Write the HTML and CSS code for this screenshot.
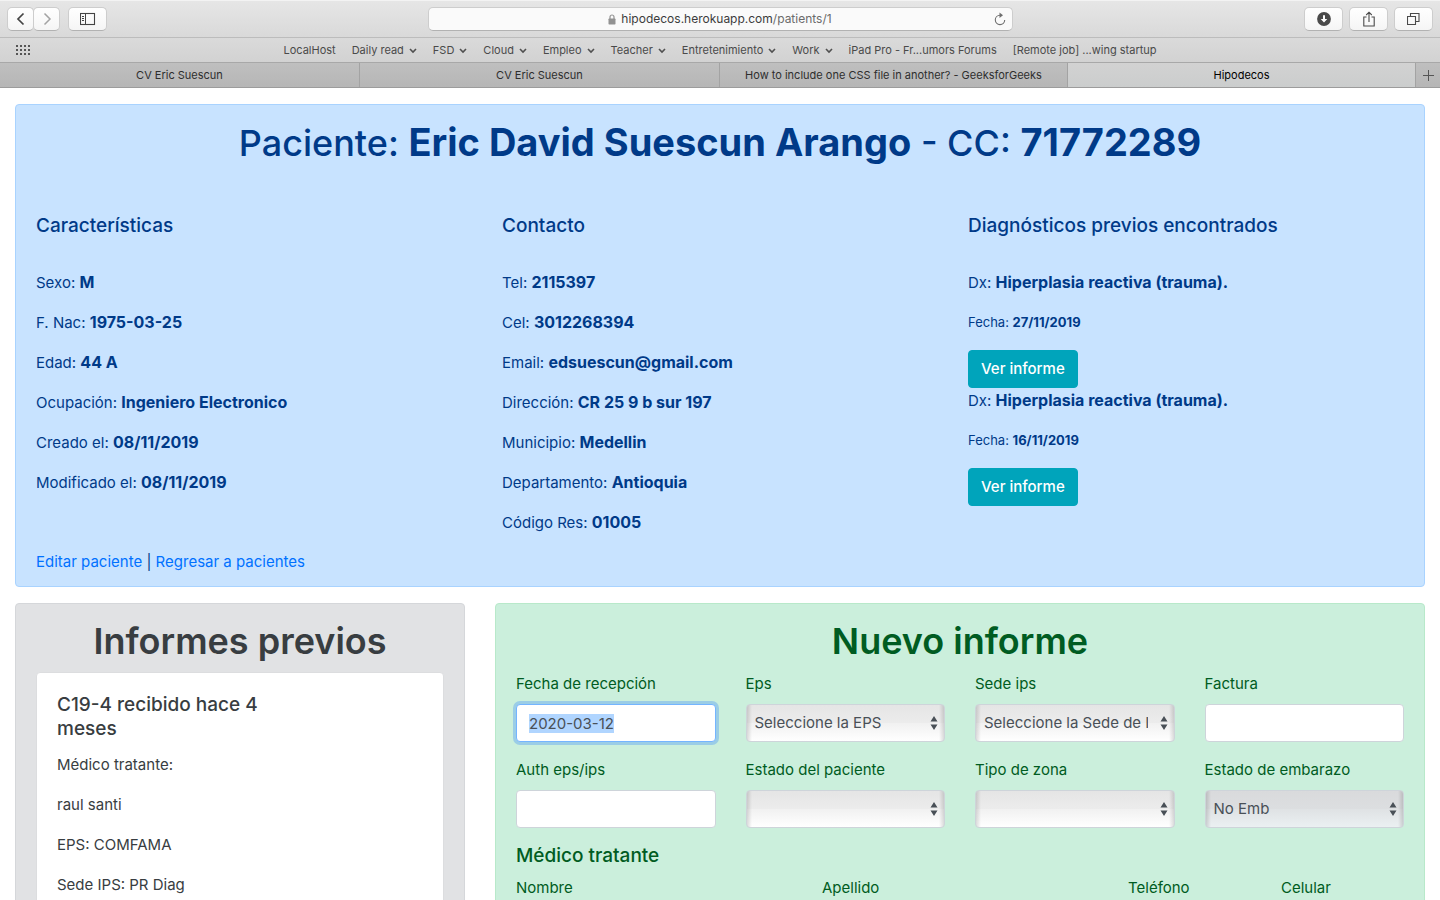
FILE: index.html
```html
<!DOCTYPE html>
<html lang="es">
<head>
<meta charset="utf-8">
<meta name="viewport" content="width=device-width, initial-scale=1">
<title>Hipodecos</title>
<link rel="stylesheet" href="styles.css">
</head>
<body>
<header class="browser">
  <div class="toolbar">
    <div class="tool-group">
      <div class="nav-pair">
        <button class="tool nav" type="button" aria-label="Atrás"><svg width="10" height="14" viewBox="0 0 10 14"><path d="M7.500 1.500 2 7l5.500 5.500" fill="none" stroke="#444" stroke-width="1.700"/></svg></button>
        <button class="tool nav" type="button" aria-label="Adelante"><svg width="10" height="14" viewBox="0 0 10 14"><path d="M2.500 1.500 8 7l-5.500 5.500" fill="none" stroke="#a3a3a3" stroke-width="1.500"/></svg></button>
      </div>
      <button class="tool" type="button" aria-label="Barra lateral"><svg width="16" height="14" viewBox="0 0 16 14"><g fill="none" stroke="#444"><rect x=".5" y="1.500" width="14" height="11" stroke-width="1.100"/><path d="M5.500 1.500v11M2 4.500h2M2 6.500h2M2 8.500h2"/></g></svg></button>
    </div>
    <div class="address">
      <svg class="lock" width="8" height="11" viewBox="0 0 8 11"><path d="M2 5V3a2 2 0 0 1 4 0v2" fill="none" stroke="#929292" stroke-width="1.200"/><rect x=".5" y="4.500" width="7" height="6" rx=".7" fill="#929292"/></svg>
      <span>hipodecos.herokuapp.com<span class="path">/patients/1</span></span>
      <button class="reload" type="button" aria-label="Recargar"><svg width="12" height="14" viewBox="0 0 12 14"><path d="M7 3.200H6A4.700 4.700 0 1 0 10.700 8" fill="none" stroke="#6e6e6e" stroke-width="1.100"/><path d="M5.500 0.600 9 3.300 5.500 6z" fill="#6e6e6e"/></svg></button>
    </div>
    <div class="tool-group right">
      <button class="tool" type="button" aria-label="Descargas"><svg width="14" height="14" viewBox="0 0 14 14"><circle cx="7" cy="7" r="6.900" fill="#4a4a4a"/><path d="M6 3.300h2V7h2.300L7 10.600 3.700 7H6z" fill="#fff"/></svg></button>
      <button class="tool" type="button" aria-label="Compartir"><svg width="12" height="16" viewBox="0 0 12 16"><path d="M3.500 6H.8v9h10.400V6H8.500M6 11V1.200M3.200 4 6 1.200 8.800 4" fill="none" stroke="#4a4a4a" stroke-width="1.100"/></svg></button>
      <button class="tool" type="button" aria-label="Pestañas"><svg width="13" height="14" viewBox="0 0 13 14"><path d="M.5 4.500h8v8h-8zM3.500 4.500v-3h8.500v8H8.500" fill="none" stroke="#4a4a4a" stroke-width="1.100"/></svg></button>
    </div>
  </div>
  <nav class="bookmarks" aria-label="Favoritos">
    <button class="grid-button" type="button" aria-label="Sitios"><svg width="15" height="11" viewBox="0 0 15 11"><path d="M0 1h15M0 5h15M0 9h15" stroke="#555" stroke-width="2" stroke-dasharray="2 2"/></svg></button>
    <a href="#">LocalHost</a>
    <a href="#" class="folder">Daily read</a>
    <a href="#" class="folder">FSD</a>
    <a href="#" class="folder">Cloud</a>
    <a href="#" class="folder">Empleo</a>
    <a href="#" class="folder">Teacher</a>
    <a href="#" class="folder">Entretenimiento</a>
    <a href="#" class="folder">Work</a>
    <a href="#">iPad Pro - Fr...umors Forums</a>
    <a href="#">[Remote job] ...wing startup</a>
  </nav>
  <div class="tabs">
    <button type="button" class="tab">CV Eric Suescun</button>
    <button type="button" class="tab">CV Eric Suescun</button>
    <button type="button" class="tab">How to include one CSS file in another? - GeeksforGeeks</button>
    <button type="button" class="tab active">Hipodecos</button>
    <button type="button" class="tab add" aria-label="Nueva pestaña"><svg width="11" height="11" viewBox="0 0 11 11"><path d="M5.500 0v11M0 5.500h11" stroke="#555"/></svg></button>
  </div>
</header>

<main class="page">
  <section class="panel patient">
    <h1>Paciente: <strong>Eric David Suescun Arango</strong> - CC: <strong>71772289</strong></h1>
    <div class="facts">
      <div>
        <h2>Características</h2>
        <p>Sexo: <strong>M</strong></p>
        <p>F. Nac: <strong>1975-03-25</strong></p>
        <p>Edad: <strong>44 A</strong></p>
        <p>Ocupación: <strong>Ingeniero Electronico</strong></p>
        <p>Creado el: <strong>08/11/2019</strong></p>
        <p>Modificado el: <strong>08/11/2019</strong></p>
      </div>
      <div>
        <h2>Contacto</h2>
        <p>Tel: <strong>2115397</strong></p>
        <p>Cel: <strong>3012268394</strong></p>
        <p>Email: <strong>edsuescun@gmail.com</strong></p>
        <p>Dirección: <strong>CR 25 9 b sur 197</strong></p>
        <p>Municipio: <strong>Medellin</strong></p>
        <p>Departamento: <strong>Antioquia</strong></p>
        <p>Código Res: <strong>01005</strong></p>
      </div>
      <div>
        <h2>Diagnósticos previos encontrados</h2>
        <p>Dx: <strong>Hiperplasia reactiva (trauma).</strong></p>
        <p><small>Fecha: <strong>27/11/2019</strong></small></p>
        <a class="btn" href="#">Ver informe</a>
        <p>Dx: <strong>Hiperplasia reactiva (trauma).</strong></p>
        <p><small>Fecha: <strong>16/11/2019</strong></small></p>
        <a class="btn" href="#">Ver informe</a>
      </div>
    </div>
    <div class="links"><a href="#">Editar paciente</a> | <a href="#">Regresar a pacientes</a></div>
  </section>

  <div class="columns">
    <section class="panel previous">
      <h1>Informes previos</h1>
      <article class="card">
        <h2>C19-4 recibido hace 4 meses</h2>
        <p>Médico tratante:</p>
        <p>raul santi</p>
        <p>EPS: COMFAMA</p>
        <p>Sede IPS: PR Diag</p>
      </article>
    </section>

    <section class="panel report">
      <h1>Nuevo informe</h1>
      <form>
        <div class="fields">
          <div class="field"><label for="fecha">Fecha de recepción</label><input id="fecha" type="text" value="2020-03-12"></div>
          <div class="field"><label for="eps">Eps</label><select id="eps"><option>Seleccione la EPS</option></select></div>
          <div class="field"><label for="sede">Sede ips</label><select id="sede"><option>Seleccione la Sede de IPS</option></select></div>
          <div class="field"><label for="factura">Factura</label><input id="factura" type="text"></div>
          <div class="field"><label for="auth">Auth eps/ips</label><input id="auth" type="text"></div>
          <div class="field"><label for="estado">Estado del paciente</label><select id="estado"><option></option></select></div>
          <div class="field"><label for="zona">Tipo de zona</label><select id="zona"><option></option></select></div>
          <div class="field"><label for="embarazo">Estado de embarazo</label><select id="embarazo" disabled><option>No Emb</option></select></div>
        </div>
        <h2>Médico tratante</h2>
        <div class="fields doctor">
          <div class="field wide"><label for="nombre">Nombre</label><input id="nombre" type="text"></div>
          <div class="field wide"><label for="apellido">Apellido</label><input id="apellido" type="text"></div>
          <div class="field"><label for="telefono">Teléfono</label><input id="telefono" type="text"></div>
          <div class="field"><label for="celular">Celular</label><input id="celular" type="text"></div>
        </div>
      </form>
    </section>
  </div>
</main>
<script src="main.js"></script>
</body>
</html>
```
FILE: styles.css
```css
* { box-sizing: border-box; }

body {
  margin: 0;
  height: 100vh;
  display: flex;
  flex-direction: column;
  font: 15px/24px Inter, "Liberation Sans", sans-serif;
  color: #212529;
  background: #fff;
}

h1, h2, p { margin: 0; }
button, input, select { font: inherit; }
svg { display: block; }

/* Browser chrome */
.browser {
  flex: none;
  font-size: 11px;
  line-height: 14px;
  color: #4a4a4a;
}

.toolbar {
  height: 38px;
  display: grid;
  grid-template-columns: 1fr minmax(200px, 585px) 1fr;
  align-items: center;
  padding: 0 7px;
  background: linear-gradient(#e6e6e6, #d9d9d9);
  border-top: 1px solid #f3f3f3;
  border-bottom: 1px solid #bcbcbc;
}

.tool-group { display: flex; gap: 8px; }
.tool-group.right { justify-content: flex-end; gap: 6px; }
.nav-pair { display: flex; }

.tool {
  width: 39px;
  height: 24px;
  display: flex;
  align-items: center;
  justify-content: center;
  padding: 0;
  border: 1px solid #cdcdcd;
  border-bottom-color: #b2b2b2;
  border-radius: 5px;
  background: linear-gradient(#fff, #f5f5f5);
}
.tool.nav { width: 27px; }
.nav + .nav { margin-left: -1px; }

.address {
  height: 24px;
  display: flex;
  align-items: center;
  justify-content: center;
  gap: 5px;
  position: relative;
  border: 1px solid #cdcdcd;
  border-bottom-color: #b2b2b2;
  border-radius: 5px;
  background: #fafafa;
  color: #3c3c3c;
  font-size: 12px;
}
.path { color: #6b6b6b; }

.reload {
  position: absolute;
  right: 6px;
  padding: 0;
  border: 0;
  background: none;
}

.bookmarks {
  height: 25px;
  display: flex;
  align-items: center;
  justify-content: center;
  position: relative;
  background: linear-gradient(#dadada, #d2d2d2);
  border-bottom: 1px solid #a8a8a8;
}
.bookmarks a {
  display: flex;
  align-items: center;
  gap: 5px;
  padding: 0 8px;
  color: inherit;
  text-decoration: none;
  white-space: nowrap;
}
.folder::after {
  content: "";
  width: 8px;
  height: 6px;
  margin-top: 2px;
  background: url("data:image/svg+xml,%3Csvg xmlns='http://www.w3.org/2000/svg' width='8' height='6'%3E%3Cpath d='M1 1l3 3 3-3' fill='none' stroke='%23505050' stroke-width='1.600'/%3E%3C/svg%3E") no-repeat;
}
.grid-button {
  position: absolute;
  left: 16px;
  padding: 0;
  border: 0;
  background: none;
}

.tabs {
  height: 25px;
  display: grid;
  grid-template-columns: 360fr 360fr 348fr 348fr 24px;
  border-bottom: 1px solid #9c9c9c;
}
.tab {
  min-width: 0;
  padding: 0;
  border: 0;
  border-right: 1px solid #a3a3a3;
  background: linear-gradient(#bfbfbf, #b6b6b6);
  color: #2e2e2e;
  white-space: nowrap;
  overflow: hidden;
}
.tab.active { background: linear-gradient(#d2d2d2, #cbcdcd); color: #000; }
.tab.add { border-right: 0; display: grid; place-items: center; }

/* Page */
.page {
  flex: 1;
  min-height: 0;
  overflow-y: auto;
  scrollbar-width: none;
  padding-top: 16px;
}

.panel {
  margin: 0 15px 16px;
  padding: 12px 20px;
  border: 1px solid;
  border-radius: 4px;
}
.panel h1 {
  margin-bottom: 6px;
  font-size: 36px;
  line-height: 50px;
  font-weight: 600;
  text-align: center;
}
h2 { font-size: 19px; line-height: 24px; font-weight: 500; }
strong { font-size: 16px; font-weight: 700; }
small, small strong { font-size: 13px; }

.patient { color: #003a88; background: #c8e3ff; border-color: #a9d3ff; }
.patient h1 { font-weight: 500; }
.patient h1 strong { font-size: 38px; }
.facts {
  display: grid;
  grid-template-columns: repeat(3, 1fr);
  gap: 30px;
  padding-top: 40px;
}
.facts h2 { margin-bottom: 32px; }
.facts p { height: 24px; margin-bottom: 16px; }

.btn {
  display: table;
  padding: 6px 12px;
  border: 1px solid #00a4bb;
  border-radius: 4px;
  background: #00a4bb;
  color: #fff;
  font-weight: 500;
  text-decoration: none;
}

.links a { color: #0071ff; text-decoration: none; }

.columns { display: grid; grid-template-columns: 1fr 2fr; }
.previous { color: #383d41; background: #e1e2e4; border-color: #d5d7da; }
.report { color: #005c22; background: #cbefdc; border-color: #b8e9ca; }

.card {
  padding: 20px;
  border: 1px solid #dcdddf;
  border-radius: 4px;
  background: #fff;
}
.card h2 { width: 64%; margin-bottom: 12px; }
.card p { margin-bottom: 16px; }

.fields {
  display: grid;
  grid-template-columns: repeat(4, 1fr);
  gap: 16px 30px;
  margin-bottom: 16px;
}
.fields.doctor { grid-template-columns: repeat(6, 1fr); }
.wide { grid-column: span 2; }
.report h2 { margin-bottom: 8px; }

.field { min-width: 0; }
.field label { display: block; margin-bottom: 8px; }
.field input,
.field select {
  display: block;
  width: 100%;
  height: 38px;
  border: 1px solid #ced4da;
  border-radius: 4px;
  color: #495057;
  background: #fff;
  outline: 0;
}
.field input { padding: 6px 12px; }
.field input:focus { border-color: #74b5ff; box-shadow: 0 0 0 3px #9bcde6; }
.field input::selection { background: #b0d5ff; color: #495057; }

.field select {
  --face: linear-gradient(#e5e5e5, #ececec 50%, #f1f1f1 51%, #fff);
  appearance: none;
  padding: 0 26px 0 8px;
  opacity: 1;
  background:
    url("data:image/svg+xml,%3Csvg xmlns='http://www.w3.org/2000/svg' width='8' height='14'%3E%3Cpath d='M4 0l3.500 5.500h-7zM4 14l3.500-5.500h-7z' fill='%23495057'/%3E%3C/svg%3E") no-repeat right 6px center,
    linear-gradient(90deg, #0002, #0000 5px, #0000 calc(100% - 5px), #0002),
    var(--face);
}
.field select:disabled {
  --face: linear-gradient(#d9dadc, #dcdee0 50%, #dfe2e4 51%, #ebf0f2);
}
```
FILE: main.js
```js
const received = document.getElementById("fecha");
received.focus({ preventScroll: true });
received.select();
```
